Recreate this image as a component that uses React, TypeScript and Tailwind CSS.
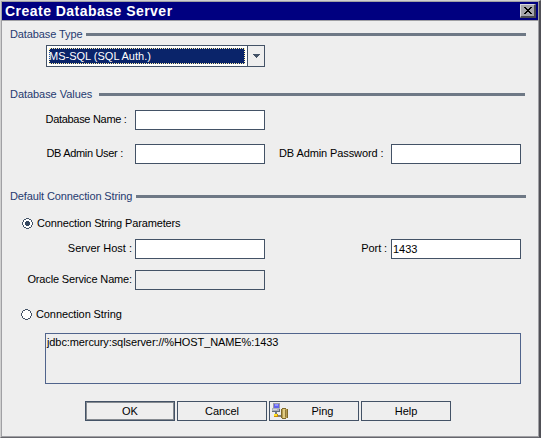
import type { ReactNode } from "react";

const field = "box-border h-5 w-[130px] shrink-0 rounded-none border border-[#435266] px-px text-[11px] leading-[18px] outline-none";

function GroupTitle({ children, textClass, lineClass }: { children: ReactNode; textClass: string; lineClass: string }) {
  return (
    <div className="flex h-[15px] items-center pl-2">
      <span className={`shrink-0 text-[#263a70] ${textClass}`}>{children}</span>
      <span className={`h-[3px] shrink-0 bg-[#6e7885] ${lineClass}`} />
    </div>
  );
}

function PushButton({ children, primary = false }: { children: ReactNode; primary?: boolean }) {
  return (
    <button
      className={`relative flex h-5 w-[90px] items-center justify-center border border-[#435266] bg-[#eee] tracking-[-0.05px] ${primary ? "shadow-[inset_0_0_0_1px_#858a90]" : ""}`}
    >
      {children}
    </button>
  );
}

function Radio({ checked = false }: { checked?: boolean }) {
  return (
    <svg className="size-[11px] shrink-0" viewBox="0 0 11 11" shapeRendering="crispEdges">
      <path d="M4 1h3v1h2v2h1v3h-1v2h-2v1h-3v-1h-2v-2h-1v-3h1v-2h2z" fill="#fff" />
      <path d="M4 0h3v1H4zM2 1h2v1H2zM7 1h2v1H7zM1 2h1v2H1zM9 2h1v2H9zM0 4h1v3H0zM10 4h1v3h-1zM1 7h1v2H1zM9 7h1v2H9zM2 9h2v1H2zM7 9h2v1H7zM4 10h3v1H4z" fill="#435266" />
      {checked && <path d="M4 3h3v1h1v3H7v1H4V7H3V4h1z" fill="#364860" />}
    </svg>
  );
}

function PingIcon() {
  return (
    <svg className="absolute left-[2px] top-[1px] h-4 w-[17px]" viewBox="0 0 17 16" shapeRendering="crispEdges">
      <path d="M1 0h7v6H1z" fill="#9a9aa4" />
      <path d="M2 1h5v4H2z" fill="#6262ee" />
      <path d="M3 1h3v2H3z" fill="#9494ff" />
      <path d="M0 5h8v3H0z" fill="#aeb2bd" />
      <path d="M0 8h8v1H0zM7 6h1v3H7z" fill="#626b78" />
      <path d="M1 6h4v1H1z" fill="#d2d5db" />
      <path d="M3 9h2v2H3z" fill="#737a86" />
      <path d="M2 11h4v3H2z" fill="#c98c08" />
      <path d="M2 11h3v2H2z" fill="#ffe221" />
      <path d="M6 12h4v2H6z" fill="#85817a" />
      <path d="M10 5h4v1h2v9h-2v1h-4v-1H9V6h1z" fill="#806a29" />
      <path d="M10 6h5v9h-5z" fill="#b49a50" />
      <path d="M11 6h2v9h-2z" fill="#e0cc83" />
      <path d="M13 7h1v7h-1z" fill="#92793a" />
    </svg>
  );
}

export default function App() {
  return (
    <div className="flex h-[438px] w-[541px] flex-col overflow-hidden border-b border-l border-r-2 border-t border-b-[#66666c] border-l-[#d0d0d0] border-r-[#505056] border-t-[#d0d0d0] bg-[#eee] font-['Liberation_Sans',Arial,sans-serif] text-[11px] leading-[15px] text-black">
      <div className="flex h-[436px] flex-col whitespace-nowrap border border-[#a0a0a4]">
        <header className="flex h-[19px] shrink-0 items-center justify-between border-b border-[#a0a0a4] bg-[#000080] pl-[3px] pr-[2px]">
          <h1 className="text-[14px] font-bold leading-[18px] tracking-[0.47px] text-white">Create Database Server</h1>
          <button aria-label="Close" className="flex h-[14px] w-4 items-center justify-center border border-b-2 border-r-2 border-b-[#4a4a50] border-l-[#d8d8dc] border-r-[#4a4a50] border-t-[#d8d8dc] bg-[#a5a5ab]">
            <svg className="h-[7px] w-2" viewBox="0 0 8 7" shapeRendering="crispEdges">
              <path d="M0 0h2v1h1v1h2V1h1V0h2v1H7v1H6v1H5v1h1v1h1v1h1v1H6V6H5V5H3v1H2v1H0V6h1V5h1V4h1V3H2V2H1V1H0z" fill="#000" />
            </svg>
          </button>
        </header>

        <section className="mt-[6px] h-[60px] shrink-0">
          <GroupTitle textClass="w-[76px] tracking-[-0.1px]" lineClass="w-[440px]">Database Type</GroupTitle>
          <div className="ml-11 mt-[3px] flex h-[22px] w-[219px] border border-[#435266] bg-white">
            <div className="m-[2px] h-4 w-[196px] border border-dotted border-[#fff2a8] bg-[#0a246a] leading-[14px] text-white">
              <span className="-ml-px">MS-SQL (SQL Auth.)</span>
            </div>
            <div className="flex flex-1 items-center justify-center border-l border-[#435266] bg-[#eee]">
              <svg className="h-1 w-[7px]" viewBox="0 0 7 4" shapeRendering="crispEdges">
                <path d="M0 0h7v1H6v1H5v1H4v1H3V3H2V2H1V1H0z" fill="#435266" />
              </svg>
            </div>
          </div>
        </section>

        <section className="h-[102px] shrink-0">
          <GroupTitle textClass="w-[89px] tracking-[-0.05px]" lineClass="w-[426px]">Database Values</GroupTitle>
          <div className="mt-2 flex h-5 items-center">
            <label className="w-[133px] pb-[2px] pl-[43.5px] tracking-[-0.3px]">Database Name :</label>
            <input className={`${field} bg-white`} />
          </div>
          <div className="mt-[14px] flex h-5 items-center">
            <label className="w-[133px] pb-[2px] pl-[44.5px] tracking-[-0.33px]">DB Admin User :</label>
            <input className={`${field} bg-white`} />
            <label className="w-[126px] pb-[2px] pl-[14px] tracking-[-0.1px]">DB Admin Password :</label>
            <input className={`${field} bg-white`} />
          </div>
        </section>

        <section className="h-[212px] shrink-0">
          <GroupTitle textClass="w-[126px] tracking-[-0.12px]" lineClass="w-[390px]">Default Connection String</GroupTitle>
          <label className="ml-5 mt-3 flex h-[15px] items-center gap-1">
            <Radio checked /><span className="tracking-[-0.14px]">Connection String Parameters</span>
          </label>
          <div className="mt-2 flex h-5 items-center">
            <label className="w-[133px] pb-[2px] pr-[3px] text-right">Server Host :</label>
            <input className={`${field} bg-white`} />
            <label className="w-[126px] pb-[2px] pr-1 text-right tracking-[-0.1px]">Port :</label>
            <input className={`${field} bg-white`} defaultValue="1433" />
          </div>
          <div className="mt-[11px] flex h-5 items-center">
            <label className="w-[133px] pb-[2px] pr-[3px] text-right tracking-[-0.15px]">Oracle Service Name:</label>
            <input className={`${field} bg-[#eee]`} disabled />
          </div>
          <label className="ml-[19px] mt-[17px] flex h-[15px] items-center gap-1">
            <Radio /><span className="tracking-[-0.1px]">Connection String</span>
          </label>
          <div className="ml-[43px] mt-[11px] h-[51px] w-[476px] border border-[#50648c] px-px pt-px tracking-[-0.1px]">
            jdbc:mercury:sqlserver://%HOST_NAME%:1433
          </div>
        </section>

        <footer className="ml-[83px] flex gap-[2px]">
          <PushButton primary>OK</PushButton>
          <PushButton>Cancel</PushButton>
          <PushButton><PingIcon /><span className="pl-[17px]">Ping</span></PushButton>
          <PushButton>Help</PushButton>
        </footer>
      </div>
    </div>
  );
}
